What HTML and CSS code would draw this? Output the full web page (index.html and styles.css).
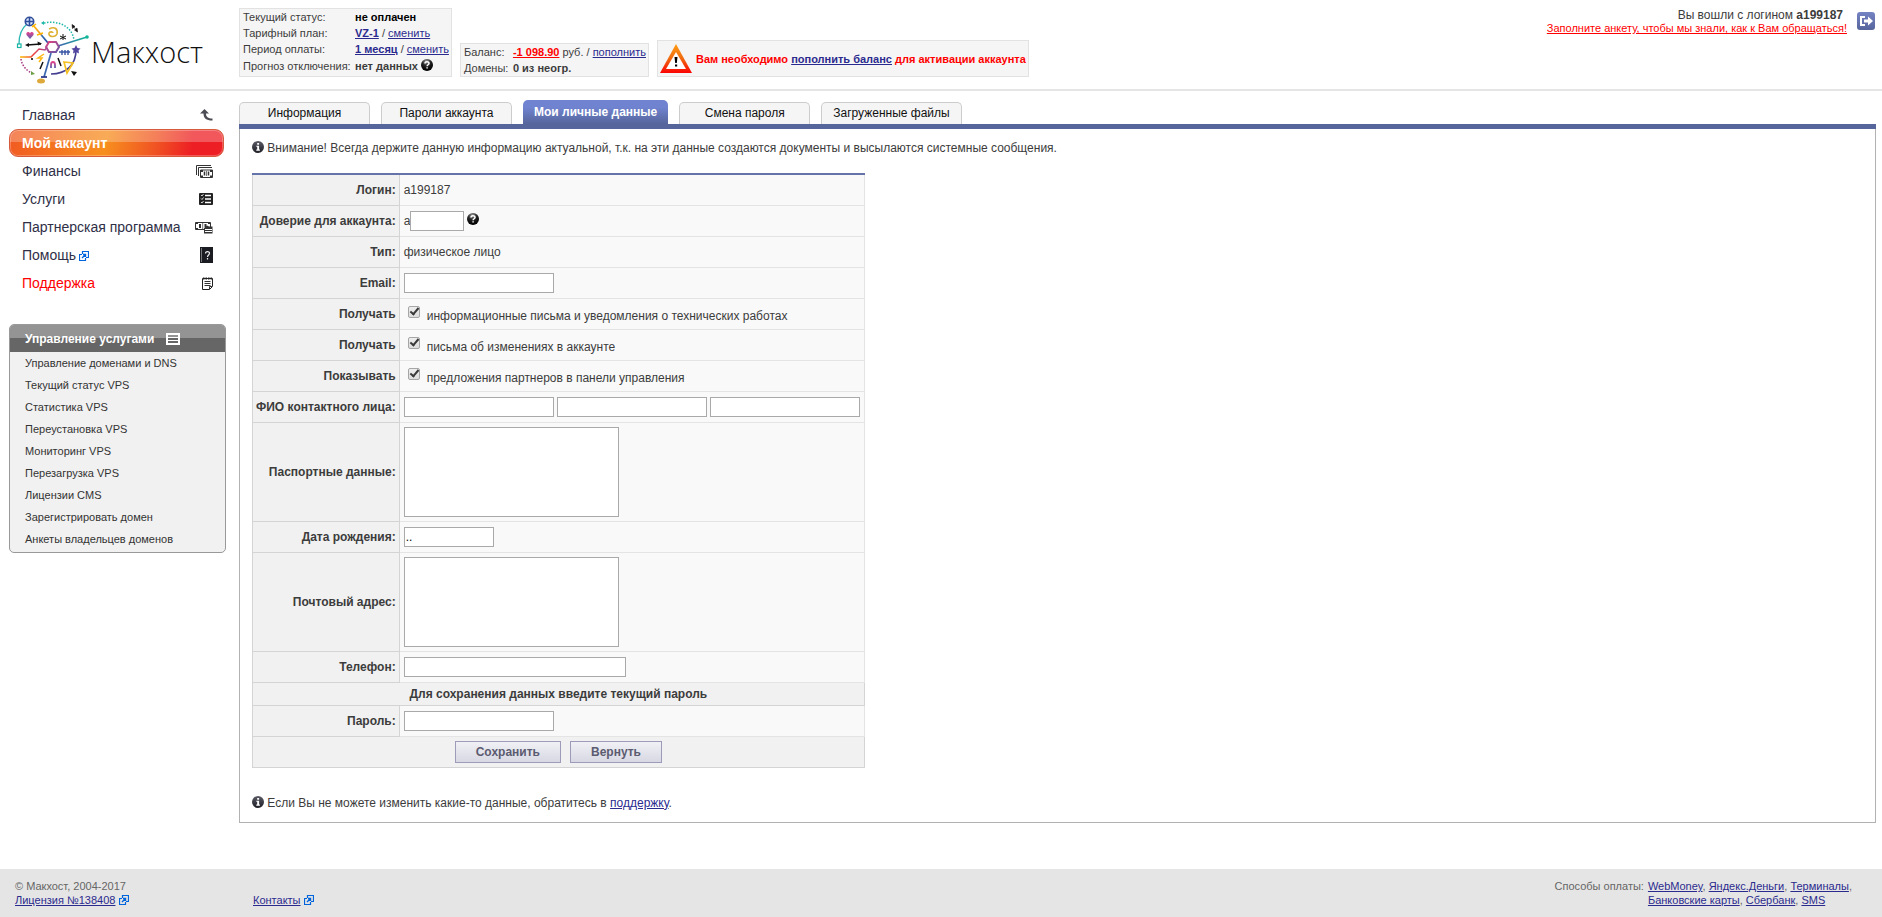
FILE: index.html
```html
<!DOCTYPE html>
<html lang="ru">
<head>
  <meta charset="UTF-8">
  <meta name="viewport" content="width=device-width, initial-scale=1.0">
  <title>Макхост - Мои личные данные</title>
  <link rel="stylesheet" href="styles.css">
</head>
<body>

  <!-- общие иконки -->
  <svg class="sprite" aria-hidden="true">
    <defs>
      <radialGradient id="ball" cx="45%" cy="20%" r="75%">
        <stop offset="0" stop-color="#999"/>
        <stop offset="0.5" stop-color="#222"/>
        <stop offset="1" stop-color="#000"/>
      </radialGradient>
      <linearGradient id="info-bg" x1="0" y1="0" x2="0" y2="1">
        <stop offset="0" stop-color="#5b5b66"/>
        <stop offset="1" stop-color="#1d1d26"/>
      </linearGradient>
    </defs>
    <symbol id="i-help" viewBox="0 0 12 12">
      <circle cx="6" cy="6" r="6" fill="url(#ball)"/>
      <path d="M4 4.6C4 2.2 8 2.2 8 4.4C8 5.8 6.1 5.7 6.1 7.3M6.1 8.2V9.6" fill="none" stroke="#fff" stroke-width="1.5"/>
    </symbol>
    <symbol id="i-info" viewBox="0 0 12 12">
      <circle cx="6" cy="6" r="6" fill="url(#info-bg)"/>
      <path d="M5.2 2h1.9v1.7H5.2zM4.3 4.7h2.8v3.9h.8v1.1H4.3V8.6h.9V5.8h-.9z" fill="#fff"/>
    </symbol>
    <symbol id="i-ext" viewBox="0 0 10 10">
      <path d="M3.500 3V.5H9.500V6.500H7M3 3.500H.5V9.500H6.500V7" fill="none" stroke="#0064dc" stroke-width="1.2"/>
      <path d="M3 7L6.500 3.500M4 3.500H6.500V6" fill="none" stroke="#0064dc" stroke-width="1.4"/>
    </symbol>
  </svg>

  <header class="header">
    <a class="logo" href="#">
      <svg width="76" height="70" viewBox="0 0 76 70" fill="none">
        <defs>
          <linearGradient id="lg-a" x1="0" y1="0" x2="1" y2="1"><stop offset="0" stop-color="#ffbe00"/><stop offset="0.5" stop-color="#ee8f2c"/><stop offset="0.6" stop-color="#2d6fb5"/><stop offset="1" stop-color="#324b9b"/></linearGradient>
          <linearGradient id="lg-b" x1="0" y1="0" x2="1" y2="0"><stop offset="0" stop-color="#3f63b0"/><stop offset="1" stop-color="#10b697"/></linearGradient>
          <linearGradient id="lg-c" x1="0" y1="0" x2="1" y2="1"><stop offset="0" stop-color="#e24480"/><stop offset="1" stop-color="#6057a6"/></linearGradient>
          <linearGradient id="lg-d" x1="0" y1="0" x2="1" y2="0"><stop offset="0" stop-color="#ffc000"/><stop offset="0.5" stop-color="#ee3b3b"/><stop offset="1" stop-color="#a6509b"/></linearGradient>
          <linearGradient id="lg-e" x1="0" y1="0" x2="0" y2="1"><stop offset="0" stop-color="#e6408a"/><stop offset="1" stop-color="#5564b2"/></linearGradient>
        </defs>
        <!-- дуга слева и круг с решёткой -->
        <path d="M12 10C7 14 4 22 4 30" stroke="#2cb6b3" stroke-width="1.300"/>
        <rect x="2.500" y="30" width="3.500" height="3.500" stroke="#17b5a2" stroke-width="1.200"/>
        <circle cx="14.500" cy="7.500" r="4.200" fill="#dbe6fa" stroke="#2f4c9b" stroke-width="1.600"/>
        <path d="M10.500 7.500h8M14.500 3.500v8" stroke="#2f4c9b" stroke-width="1.600"/>
        <!-- лучи -->
        <path d="M18 11L33 29" stroke="url(#lg-a)" stroke-width="1.800"/>
        <path d="M17 13l4-3M22 21l6-2" stroke="#ffb400" stroke-width="1.500"/>
        <path d="M43 32L72 23" stroke="url(#lg-b)" stroke-width="1.500"/>
        <circle cx="72" cy="23" r="1.800" fill="#10b697"/>
        <path d="M36 39L29 63" stroke="#3b68b1" stroke-width="1.700"/>
        <path d="M26 63h6" stroke="#303b8d" stroke-width="1.800"/>
        <ellipse cx="26" cy="67" rx="4" ry="2.500" fill="#dda93a"/>
        <path d="M31 33l3-5h7l3 5-3 5h-7z" fill="#fff" stroke="url(#lg-c)" stroke-width="2"/>
        <path d="M5 43l11 0 8-8 6 1 2-3" stroke="url(#lg-d)" stroke-width="1.400"/>
        <!-- пунктиры -->
        <path d="M29 9C43 6 57 12 59 26" stroke="#1cb7a9" stroke-width="1.500" stroke-dasharray="1.500 1.500"/>
        <path d="M6 45C7 52 12 57 17 59" stroke="#a3347d" stroke-width="1.500" stroke-dasharray="1.500 1.500"/>
        <path d="M16 57l4 3-4 1z" fill="#6a9d42"/>
        <path d="M29 7v4l-3-2z" fill="#1cb7a9"/>
        <!-- дуга справа -->
        <path d="M61 36C61 51 51 60 36 60" stroke="#443f91" stroke-width="1.700"/>
        <path d="M61 31l1.500 3 3 .5-2 2 .5 3-3-1.500-3 1.500.5-3-2-2 3-.5z" fill="#5145a0"/>
        <!-- мелкие значки -->
        <path d="M15 25l-3.500-4c-1-3 2.500-4 3.500-1.500 1-2.500 4.500-1.500 3.500 1.500z" fill="url(#lg-e)"/>
        <path d="M12 31l14-1" stroke="#111" stroke-width="1.300"/>
        <path d="M10 31l4-2v4zM27 29.500l-4 2-.5-4z" fill="#111"/>
        <path d="M34 15c6-3 9 0 8 5-2 4-9 3-8-1 1-2 4-1 4 0" stroke="#deb032" stroke-width="1.600"/>
        <path d="M48 20v6M45 22l6 3M51 22l-6 3" stroke="#111" stroke-width="1"/>
        <path d="M58 12l4 5M57 10.500l.5 4 2.500-2zM62.500 18l-.5-4-2.500 2z" stroke="#111" stroke-width=".6" fill="#111"/>
        <path d="M44 38h11M47 36v5M50 36v5M53 36v5" stroke="#3755a3" stroke-width="1.400"/>
        <path d="M29 40l-6 4h4l-3 4" stroke="#fdb813" stroke-width="1.500"/>
        <circle cx="17" cy="45" r="1.100" fill="#111"/>
        <path d="M28 48l-3 7M43 44l3 8" stroke="#111" stroke-width="1.500"/>
        <path d="M36 54v-3c0-4 4-4 4 0v3" stroke="url(#lg-e)" stroke-width="1.800"/>
        <path d="M49 48l9 1-6 10z" stroke="#f5c021" stroke-width="1.700"/>
        <path d="M56 57l6 1-3 4z" fill="#111"/>
      </svg>
      <span class="logo-text">Макхост</span>
    </a>

    <dl class="status status-plan">
      <dt>Текущий статус:</dt><dd><b class="black">не оплачен</b></dd>
      <dt>Тарифный план:</dt><dd><a href="#"><b>VZ-1</b></a> / <a href="#">сменить</a></dd>
      <dt>Период оплаты:</dt><dd><a href="#"><b>1 месяц</b></a> / <a href="#">сменить</a></dd>
      <dt>Прогноз отключения:</dt><dd><b>нет данных</b> <svg class="icon-round"><use href="#i-help"/></svg></dd>
    </dl>

    <dl class="status status-balance">
      <dt>Баланс:</dt><dd><a class="red" href="#"><b>-1 098.90</b></a> руб. / <a href="#">пополнить</a></dd>
      <dt>Домены:</dt><dd><b>0 из неогр.</b></dd>
    </dl>

    <div class="status alert">
      <svg width="32" height="29" viewBox="0 0 32 29">
        <defs>
          <linearGradient id="warn" x1="0" y1="0" x2="0" y2="1"><stop offset="0" stop-color="#ff9d12"/><stop offset="0.5" stop-color="#f06a10"/><stop offset="1" stop-color="#fb0303"/></linearGradient>
        </defs>
        <path d="M16 0L32 29H0z" fill="url(#warn)"/>
        <path d="M16 8L26 25H6z" fill="#fff"/>
        <path d="M14.500 13h3l-.7 6h-1.600zM15 20.500h2.200v2H15z" fill="#000"/>
      </svg>
      <span>Вам необходимо <a href="#">пополнить баланс</a> для активации аккаунта</span>
    </div>

    <div class="user">
      <div class="user-info">
        <div class="user-login">Вы вошли с логином <b>a199187</b></div>
        <a class="red" href="#">Заполните анкету, чтобы мы знали, как к Вам обращаться!</a>
      </div>
      <a class="logout" href="#" aria-label="Выход">
        <svg width="18" height="18" viewBox="0 0 18 18">
          <path d="M8 5H4v8h4" fill="none" stroke="#fff" stroke-width="2"/>
          <path d="M7 7.500h4V4.500L16 9l-5 4.500v-3H7z" fill="#fff"/>
        </svg>
      </a>
    </div>
  </header>

  <div class="wrap">
    <aside class="sidebar">
      <nav class="menu">
        <a href="#">Главная
          <svg width="13" height="12" viewBox="0 0 13 12"><path d="M4.500 0L0 4.500h3.500C3.500 9 6 11.500 12.500 11.500V9.500C8 9.500 6 8 6 4.500H9z" fill="#4c4c55"/></svg>
        </a>
        <a class="active" href="#">Мой аккаунт</a>
        <a href="#">Финансы
          <svg width="17" height="13" viewBox="0 0 17 13"><path d="M.5 10V.5H15M2.500 11V2.500H16" fill="none" stroke="#333"/><path d="M4.500 5h12v7.500h-12z" fill="#fff" stroke="#333"/><path d="M5 5h2v2H5zM14 5h2v2h-2zM5 10.500h2v2H5zM14 10.500h2v2h-2z" fill="#333"/><path d="M8.500 6.500v4M12.500 6.500v4" fill="none" stroke="#333" stroke-width="1.500"/><path d="M10.500 6v5" stroke="#777"/></svg>
        </a>
        <a href="#">Услуги
          <svg width="14" height="12" viewBox="0 0 14 12"><rect width="14" height="12" rx="1" fill="#222"/><path d="M6 2.500h6M6 6h6M6 9.500h6" stroke="#fff" stroke-width="1.500"/><path d="M2 2l1 1 1.500-2M2 5.500l1 1 1.500-2M2 9l1 1 1.500-2" fill="none" stroke="#fff" stroke-width=".8"/></svg>
        </a>
        <a href="#">Партнерская программа
          <svg width="18" height="13" viewBox="0 0 18 13"><path d="M.5 1.500h15v7H.5z" fill="#fff" stroke="#333"/><path d="M1 1h2v2H1zM13 1h2v2h-2zM1 7h2v2H1z" fill="#333"/><path d="M5 3v4M10.500 3v3" stroke="#333" stroke-width="2"/><path d="M7.700 2v6" stroke="#777"/><path d="M9 7l3-2.500 2 1h3.500v7H9z" fill="#333"/><path d="M10 8.500h7M10 10.500h7" stroke="#fff"/></svg>
        </a>
        <a href="#"><span>Помощь<svg class="icon-ext"><use href="#i-ext"/></svg></span>
          <svg width="13" height="16" viewBox="0 0 13 16"><path d="M0 0h13v16H0z" fill="#1b1b22"/><path d="M1.500 1v14" stroke="#777"/><path d="M5.500 6.500C5.500 4 9.500 4 9.500 6.300c0 1.700-2 1.700-2 3.700M7.500 11v1.500" fill="none" stroke="#eee" stroke-width="1.200"/></svg>
        </a>
        <a class="support" href="#">Поддержка
          <svg width="11" height="13" viewBox="0 0 11 13"><path d="M.5 1.500h10v8l-3 3h-7z" fill="#fff" stroke="#222"/><path d="M1 1.500h9" stroke="#222" stroke-width="2" stroke-dasharray="1.500 1"/><path d="M2.500 4.500h6M2.500 6.500h6M2.500 8.500h6M7.500 12V9.500H10" fill="none" stroke="#333"/></svg>
        </a>
      </nav>

      <div class="services">
        <h2>Управление услугами
          <svg width="14" height="12" viewBox="0 0 14 12"><rect x="1" y="1" width="12" height="10" fill="none" stroke="#fff" stroke-width="2"/><path d="M2 4.500h10M2 7.500h10" stroke="#fff"/></svg>
        </h2>
        <a href="#">Управление доменами и DNS</a>
        <a href="#">Текущий статус VPS</a>
        <a href="#">Статистика VPS</a>
        <a href="#">Переустановка VPS</a>
        <a href="#">Мониторинг VPS</a>
        <a href="#">Перезагрузка VPS</a>
        <a href="#">Лицензии CMS</a>
        <a href="#">Зарегистрировать домен</a>
        <a href="#">Анкеты владельцев доменов</a>
      </div>
    </aside>

    <main class="content">
      <nav class="tabs">
        <a href="#">Информация</a>
        <a href="#">Пароли аккаунта</a>
        <a class="active" href="#">Мои личные данные</a>
        <a href="#">Смена пароля</a>
        <a href="#">Загруженные файлы</a>
      </nav>

      <div class="panel">
        <p class="note"><svg class="icon-round"><use href="#i-info"/></svg> Внимание! Всегда держите данную информацию актуальной, т.к. на эти данные создаются документы и высылаются системные сообщения.</p>

        <form action="#" method="post">
          <table class="form">
            <tr>
              <th>Логин:</th>
              <td>a199187</td>
            </tr>
            <tr>
              <th><label for="trust">Доверие для аккаунта:</label></th>
              <td><div class="fields trust">a<input class="w-trust" type="text" id="trust"> <svg class="icon-round"><use href="#i-help"/></svg></div></td>
            </tr>
            <tr>
              <th>Тип:</th>
              <td>физическое лицо</td>
            </tr>
            <tr>
              <th><label for="email">Email:</label></th>
              <td><div class="fields"><input type="text" id="email"></div></td>
            </tr>
            <tr>
              <th>Получать</th>
              <td><label class="check"><input type="checkbox" checked><span>информационные письма и уведомления о технических работах</span></label></td>
            </tr>
            <tr>
              <th>Получать</th>
              <td><label class="check"><input type="checkbox" checked><span>письма об изменениях в аккаунте</span></label></td>
            </tr>
            <tr>
              <th>Показывать</th>
              <td><label class="check"><input type="checkbox" checked><span>предложения партнеров в панели управления</span></label></td>
            </tr>
            <tr>
              <th><label for="lastname">ФИО контактного лица:</label></th>
              <td><div class="fields"><input type="text" id="lastname"><input type="text" aria-label="Имя"><input type="text" aria-label="Отчество"></div></td>
            </tr>
            <tr>
              <th><label for="passport">Паспортные данные:</label></th>
              <td><textarea id="passport"></textarea></td>
            </tr>
            <tr>
              <th><label for="birthday">Дата рождения:</label></th>
              <td><div class="fields"><input class="w-date" type="text" id="birthday" value=".."></div></td>
            </tr>
            <tr>
              <th><label for="address">Почтовый адрес:</label></th>
              <td><textarea id="address"></textarea></td>
            </tr>
            <tr>
              <th><label for="phone">Телефон:</label></th>
              <td><div class="fields"><input class="w-phone" type="text" id="phone"></div></td>
            </tr>
            <tr class="short">
              <th class="wide" colspan="2">Для сохранения данных введите текущий пароль</th>
            </tr>
            <tr>
              <th><label for="password">Пароль:</label></th>
              <td><div class="fields"><input type="password" id="password"></div></td>
            </tr>
            <tr>
              <th class="wide" colspan="2"><div class="buttons"><button type="submit">Сохранить</button><button type="reset">Вернуть</button></div></th>
            </tr>
          </table>
        </form>

        <p class="note"><svg class="icon-round"><use href="#i-info"/></svg> Если Вы не можете изменить какие-то данные, обратитесь в <a href="#">поддержку</a>.</p>
      </div>
    </main>
  </div>

  <footer class="footer">
    <div class="copyright">© Макхост, 2004-2017<br><a href="#">Лицензия №138408</a> <svg class="icon-ext"><use href="#i-ext"/></svg></div>
    <div class="contacts"><a href="#">Контакты</a> <svg class="icon-ext"><use href="#i-ext"/></svg></div>
    <div class="payment">
      <span>Способы оплаты:</span>
      <div><a href="#">WebMoney</a>, <a href="#">Яндекс.Деньги</a>, <a href="#">Терминалы</a>,<br><a href="#">Банковские карты</a>, <a href="#">Сбербанк</a>, <a href="#">SMS</a></div>
    </div>
  </footer>

</body>
</html>
```

FILE: styles.css
```css
* {
  box-sizing: border-box;
}
body {
  display: flex;
  flex-direction: column;
  min-height: 100vh;
  margin: 0;
  background: #fff;
  color: #3c3c3c;
  font-family: Arial, "Liberation Sans", sans-serif;
  font-size: 12px;
  line-height: 16px;
}
a {
  color: #2b2b8f;
}
.red {
  color: #f00;
}
.black {
  color: #000;
}
.sprite {
  position: absolute;
  width: 0;
  height: 0;
}
.icon-round {
  width: 12px;
  height: 12px;
  vertical-align: -1px;
}
.icon-ext {
  width: 10px;
  height: 10px;
  vertical-align: -1px;
}

/* шапка */
.header {
  display: flex;
  align-items: flex-end;
  gap: 8px;
  height: 91px;
  padding: 0 7px 12px 15px;
  border-bottom: 2px solid #e5e5e5;
}
.logo {
  display: flex;
  align-items: center;
  width: 216px;
  height: 70px;
  margin-bottom: -7px;
  color: #111;
  text-decoration: none;
}
.logo-text {
  padding-top: 6px;
  font-family: "Open Sans", "Noto Sans", sans-serif;
  font-size: 29px;
  font-weight: 300;
  line-height: 32px;
}
.status {
  margin: 0;
  border: 1px solid #e2e2e2;
  background: #f5f5f5;
  font-size: 11px;
  white-space: nowrap;
}
dl.status {
  display: grid;
  padding: 0 2px 0 3px;
}
.status dd {
  margin: 0;
}
.status-plan {
  grid-template-columns: 112px auto;
}
.status-plan dt:last-of-type,
.status-plan dd:last-child {
  line-height: 19px;
}
.status-balance {
  grid-template-columns: 49px auto;
}
.alert {
  display: flex;
  align-items: center;
  gap: 4px;
  padding: 3px 2px;
  color: #f00;
  font-weight: bold;
}
.user {
  display: flex;
  align-self: flex-start;
  gap: 10px;
  margin-left: auto;
  padding-top: 8px;
}
.user-info {
  font-size: 11px;
  line-height: 12px;
  text-align: right;
}
.user-login {
  padding-right: 4px;
  font-size: 12px;
  line-height: 14px;
}
.logout {
  height: 18px;
  margin-top: 4px;
  border-radius: 3px;
  background: linear-gradient(#7583c4, #56659b);
}

/* левая колонка */
.wrap {
  display: flex;
  flex: 1;
  padding: 9px 6px 46px 9px;
}
.sidebar {
  width: 217px;
  margin-right: 13px;
}
.menu {
  margin: 1px 2px 0 0;
}
.menu a {
  display: flex;
  align-items: center;
  justify-content: space-between;
  height: 28px;
  padding: 0 11px 0 13px;
  color: #2f2f47;
  font-size: 14px;
  text-decoration: none;
}
.menu a.active {
  border: 1px solid #d85a3c;
  border-radius: 9px;
  padding-left: 12px;
  background:
    linear-gradient(rgba(255,255,255,0.25) 45%, transparent 45%),
    linear-gradient(100deg, #f15a22 0, #f78f1e 45%, #f05423 68%, #ed1f24 85%);
  box-shadow: inset 0 0 0 1px rgba(255,255,255,0.25);
  color: #fff;
  font-weight: bold;
}
.menu a.support {
  color: #f00;
}
.menu .icon-ext {
  margin-left: 3px;
}
.services {
  margin-top: 27px;
  padding-bottom: 2px;
  border: 1px solid #999;
  border-radius: 5px;
  background: #f1f1f1;
  overflow: hidden;
}
.services h2 {
  display: flex;
  align-items: center;
  gap: 12px;
  height: 27px;
  margin: 0;
  padding-left: 15px;
  background: linear-gradient(#949494 50%, #666 50%);
  color: #fff;
  font-size: 12px;
}
.services a {
  display: block;
  padding-left: 15px;
  color: #333;
  font-size: 11px;
  line-height: 22px;
  text-decoration: none;
}

/* вкладки */
.content {
  flex: 1;
}
.tabs {
  display: flex;
  align-items: flex-end;
  gap: 11px;
  border-bottom: 5px solid #56659b;
}
.tabs a {
  min-width: 131px;
  padding: 0 11px;
  border: 1px solid #ccc;
  border-bottom: 0;
  border-radius: 5px 5px 0 0;
  background: #f5f5f5;
  color: #111;
  line-height: 21px;
  text-align: center;
  text-decoration: none;
}
.tabs a.active {
  border: 0;
  padding: 1px 11px 0;
  background: linear-gradient(#7083d0 30%, #56659b);
  color: #fff;
  font-weight: bold;
  line-height: 23px;
}
.panel {
  padding: 11px 12px;
  border: 1px solid #b2b2b2;
  border-top: 0;
}
.note {
  margin: 0;
}

/* таблица с анкетой */
.form {
  margin: 17px 0 27px;
  border-collapse: collapse;
}
.form th,
.form td {
  height: 31px;
  padding: 4px;
  border: 1px solid #e4e4e4;
  background: #f9f9f9;
  text-align: left;
}
.form tr:first-child > * {
  border-top: 2px solid #6474ab;
}
.form th {
  padding: 4px 3px;
  border-color: #d4d4d4;
  background: #f1f1f1;
  text-align: right;
  white-space: nowrap;
}
.form th.wide {
  text-align: center;
}
.form .short th {
  height: 23px;
  padding: 3px;
}
.fields {
  display: flex;
  align-items: center;
  gap: 3px;
}
.fields.trust {
  gap: 0;
}
.trust .icon-round {
  margin: 0 0 4px 3px;
}
.form input[type="text"],
.form input[type="password"],
textarea {
  margin: 0;
  padding: 1px;
  border: 1px solid #a9a9a9;
  border-radius: 0;
  background: #fff;
  font: 12px/16px Arial, "Liberation Sans", sans-serif;
}
.form input[type="text"],
.form input[type="password"] {
  width: 150px;
  height: 20px;
}
.form input.w-trust {
  width: 54px;
}
.form input.w-date {
  width: 90px;
}
.form input.w-phone {
  width: 222px;
}
textarea {
  display: block;
  width: 215px;
  height: 90px;
  resize: none;
}
.check {
  display: flex;
  align-items: flex-start;
}
.check input {
  appearance: none;
  width: 12px;
  height: 12px;
  margin: 2px 7px 0 4px;
  border: 1px solid #a6a6a6;
  border-radius: 2px;
  background: linear-gradient(#eee, #ddd);
}
.check input:checked::after {
  content: '';
  display: block;
  box-sizing: border-box;
  width: 5px;
  height: 9px;
  margin: -1px 0 0 3px;
  border: solid #3a3a3a;
  border-width: 0 2px 2px 0;
  transform: rotate(40deg);
}
.check span {
  padding-top: 4px;
}
.buttons {
  display: flex;
  justify-content: center;
  gap: 9px;
}
button {
  height: 22px;
  padding: 0 20px;
  border: 1px solid #9c9cba;
  background: linear-gradient(#f0f0f5, #d8d8e4);
  color: #5b5b70;
  font: bold 12px Arial, "Liberation Sans", sans-serif;
  cursor: pointer;
}

/* подвал */
.footer {
  display: flex;
  align-items: flex-end;
  padding: 10px 30px 10px 15px;
  background: #e5e5e5;
  color: #666;
  font-size: 11px;
  line-height: 14px;
}
.copyright {
  width: 238px;
}
.payment {
  display: flex;
  gap: 4px;
  margin-left: auto;
}
```
